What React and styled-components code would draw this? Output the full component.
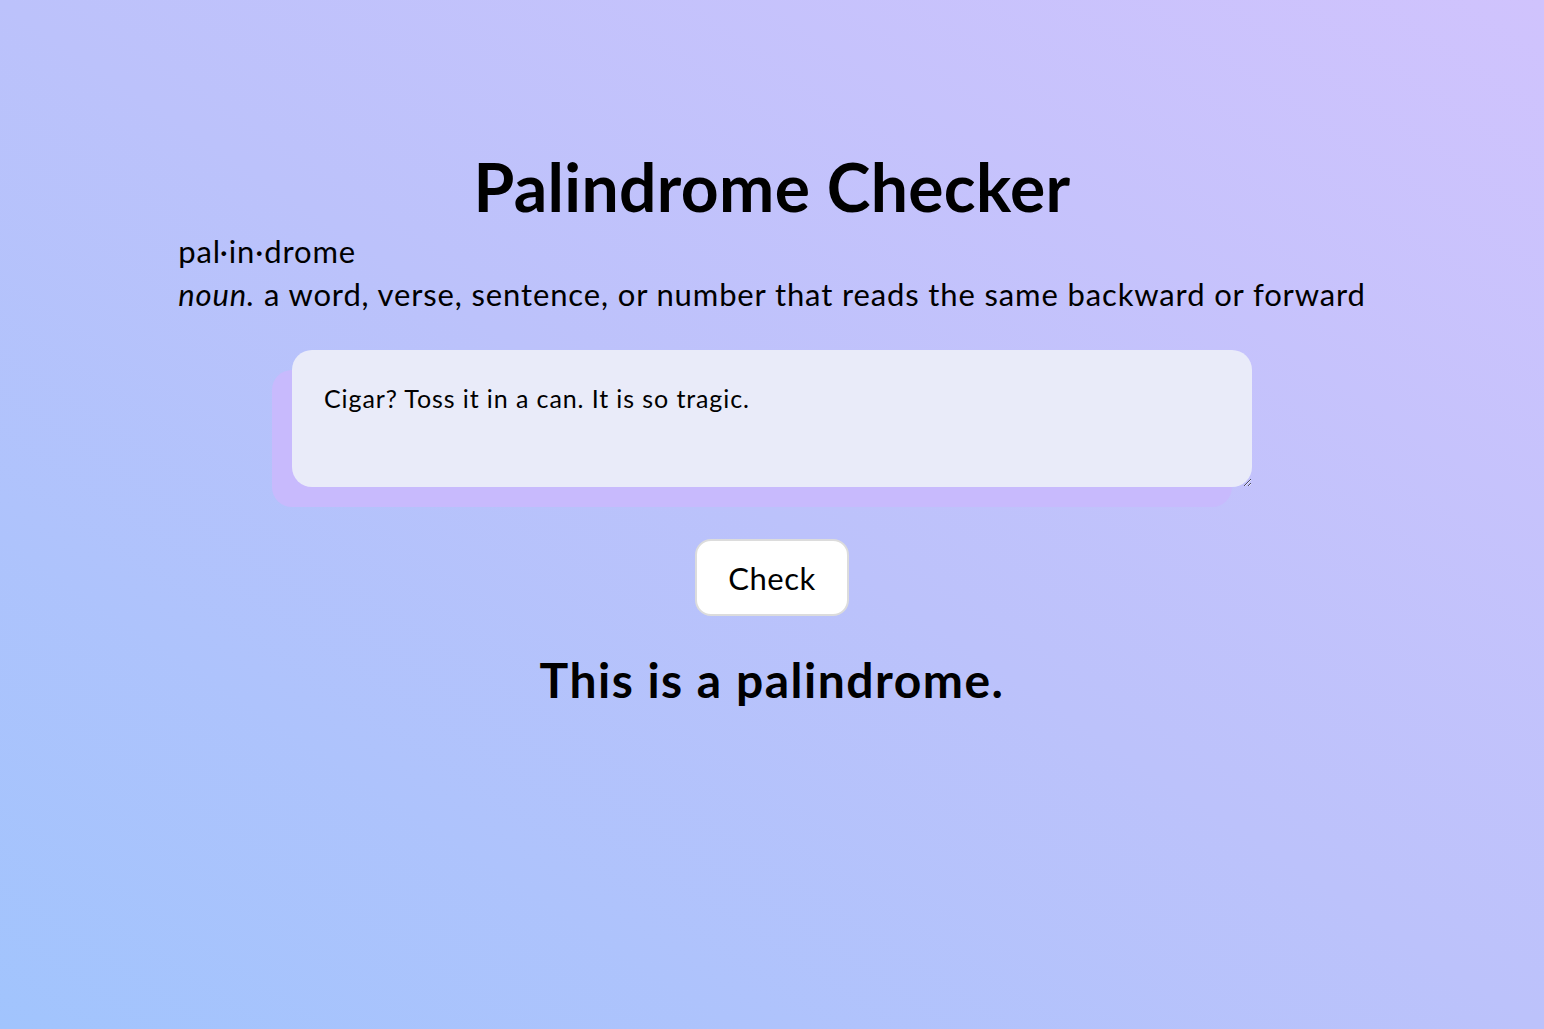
import React, { useState } from 'react'
import styled, { createGlobalStyle } from 'styled-components'

const GlobalStyle = createGlobalStyle`
  * { box-sizing: border-box; }
  html, body {
    margin: 0;
    min-height: 100%;
  }
  body {
    font-family: Lato, 'Noto Sans', sans-serif;
    color: #000;
    background: linear-gradient(to top right, #a1c4fd 0%, #bcc2fb 50%, #d0c3fd 100%);
    min-height: 100vh;
  }
`

const Page = styled.main`
  min-height: 100vh;
  display: flex;
  flex-direction: column;
  align-items: center;
  padding-top: 147px;
`

const Title = styled.h1`
  margin: 0;
  font-size: 66px;
  font-weight: 700;
  letter-spacing: 0.35px;
  line-height: 1.2;
`

const Definition = styled.div`
  width: fit-content;
  font-size: 31px;
  letter-spacing: 0.87px;
  line-height: 43px;
  margin-top: 4px;
  p { margin: 0; }
  em { font-style: italic; }
`

const InputWrap = styled.div`
  margin-top: 34px;
`

const TextBox = styled.textarea`
  display: block;
  width: 960px;
  height: 137px;
  padding: 33px 32px 32px;
  border: none;
  border-radius: 20px;
  background: #e9ebf9;
  box-shadow: -20px 20px 0 #c8bafd;
  font-family: inherit;
  font-size: 25px;
  letter-spacing: 0.9px;
  color: #000;
  resize: vertical;
  outline: none;
`

const CheckButton = styled.button`
  margin-top: 52px;
  width: 154px;
  height: 77px;
  background: #fff;
  border: 2px solid #dcdcdc;
  border-radius: 16px;
  font-family: inherit;
  font-size: 31px;
  letter-spacing: 0.5px;
  color: #000;
  cursor: pointer;
`

const Result = styled.h2`
  margin: 35px 0 0;
  font-size: 48px;
  letter-spacing: 1.5px;
  font-weight: 700;
`

const isPalindrome = (s) => {
  const clean = s.toLowerCase().replace(/[^a-z0-9]/g, '')
  return clean === [...clean].reverse().join('')
}

export default function App() {
  const [text, setText] = useState('Cigar? Toss it in a can. It is so tragic.')
  const [result, setResult] = useState(isPalindrome(text))

  return (
    <>
      <GlobalStyle />
      <Page>
        <Title>Palindrome Checker</Title>
        <Definition>
          <p>pal·in·drome</p>
          <p><em>noun.</em> a word, verse, sentence, or number that reads the same backward or forward</p>
        </Definition>
        <InputWrap>
          <TextBox value={text} onChange={(e) => setText(e.target.value)} />
        </InputWrap>
        <CheckButton onClick={() => setResult(isPalindrome(text))}>Check</CheckButton>
        <Result>{result ? 'This is a palindrome.' : 'This is not a palindrome.'}</Result>
      </Page>
    </>
  )
}
